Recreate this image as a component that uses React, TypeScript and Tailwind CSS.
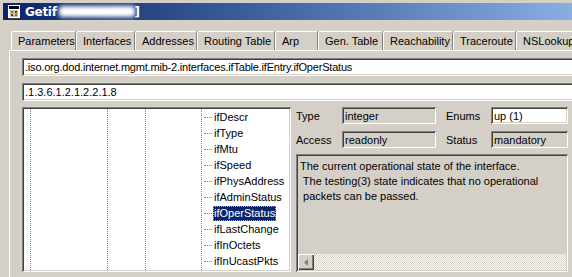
import React from 'react'

const tabs = [
  { label: 'Parameters', w: 'w-[65px]' },
  { label: 'Interfaces', w: 'w-[59px]' },
  { label: 'Addresses', w: 'w-[62px]' },
  { label: 'Routing Table', w: 'w-[78px]' },
  { label: 'Arp', w: 'w-[43px]' },
  { label: 'Gen. Table', w: 'w-[65px]' },
  { label: 'Reachability', w: 'w-[70px]' },
  { label: 'Traceroute', w: 'w-[63px]' },
  { label: 'NSLookup', w: 'w-[70px]' },
]

const items = [
  'ifDescr',
  'ifType',
  'ifMtu',
  'ifSpeed',
  'ifPhysAddress',
  'ifAdminStatus',
  'ifOperStatus',
  'ifLastChange',
  'ifInOctets',
  'ifInUcastPkts',
]

const sunken =
  'shadow-[inset_1px_1px_0_#808080,inset_-1px_-1px_0_#ffffff,inset_2px_2px_0_#404040,inset_-2px_-2px_0_#d4d0c8]'

function AppIcon() {
  return (
    <svg width="14" height="14" viewBox="0 0 14 14" className="shrink-0">
      <rect x="1" y="0" width="12" height="14" fill="#ffffff" />
      <rect x="2" y="1" width="10" height="3" fill="#000000" />
      <rect x="3" y="5" width="8" height="7" fill="#c0c0c0" />
      <rect x="4" y="6" width="2" height="2" fill="#00c000" />
      <rect x="8" y="6" width="2" height="2" fill="#e00000" />
      <rect x="4" y="9" width="2" height="2" fill="#e00000" />
      <rect x="8" y="9" width="2" height="2" fill="#00c000" />
      <rect x="1" y="13" width="12" height="1" fill="#404040" />
    </svg>
  )
}

function Field({ value, white, className }: { value: string; white?: boolean; className: string }) {
  return (
    <div className={`${sunken} ${white ? 'bg-white' : 'bg-[#d4d0c8]'} ${className} flex items-center pl-[3px] pt-[1px] whitespace-nowrap overflow-hidden`}>
      {value}
    </div>
  )
}

export default function App() {
  return (
    <div className="w-[572px] h-[277px] overflow-hidden bg-[#d4d0c8] text-[11px] text-black font-['Liberation_Sans',Arial,sans-serif] flex flex-col border-l border-t border-l-[#d4d0c8] border-t-[#d4d0c8]">
      <div className="pl-[2px] pt-[2px]">
        <div className="h-[17px] bg-gradient-to-r from-[#0a246a] to-[#8aaee0] flex items-center pl-[4px] gap-[4px]">
          <AppIcon />
          <span className="text-white font-bold text-[12px] font-['DejaVu_Sans',sans-serif] tracking-[-0.3px] flex items-center">
            Getif
            <span className="inline-block w-[76px] h-[11px] ml-[2px] bg-white rounded-[3px] blur-[2px]" />
            <span>]</span>
          </span>
        </div>
      </div>

      <div className="flex pl-[10px] mt-[11px] h-[19px] items-end">
        {tabs.map(t => (
          <div
            key={t.label}
            className={`${t.w} shrink-0 h-[19px] border-t border-l border-white rounded-tl-[2px] rounded-tr-[2px] shadow-[inset_-1px_0_0_#808080,1px_0_0_#404040] pl-[6px] pt-[1px] whitespace-nowrap`}
          >
            {t.label}
          </div>
        ))}
      </div>

      <div className="flex-1 ml-[8px] border-t border-l border-white pl-[12px] pt-[7px] flex flex-col min-h-0">
        <Field white value=".iso.org.dod.internet.mgmt.mib-2.interfaces.ifTable.ifEntry.ifOperStatus" className="h-[18px] w-[560px] tracking-[-0.2px]" />
        <Field white value=".1.3.6.1.2.1.2.2.1.8" className="h-[18px] w-[560px] mt-[7px]" />

        <div className="flex mt-[6px] h-[165px]">
          <div className={`${sunken} bg-white w-[269px] shrink-0 relative overflow-hidden p-[2px]`}>
            {[8, 85, 123, 179].map(x => (
              <div key={x} className="absolute top-[2px] bottom-[2px] border-l border-dotted border-[#808080]" style={{ left: x }} />
            ))}
            <div className="flex flex-col pl-[180px]">
              {items.map(it => (
                <div key={it} className="h-[16px] flex items-center">
                  <div className="w-[8px] border-t border-dotted border-[#808080] shrink-0" />
                  <span
                    className={`ml-[1px] h-[15px] px-[1px] flex items-center leading-none ${
                      it === 'ifOperStatus'
                        ? 'bg-[#0a246a] text-white outline-1 outline-dotted outline-[#c8b040] -outline-offset-1'
                        : ''
                    }`}
                  >
                    {it}
                  </span>
                </div>
              ))}
            </div>
          </div>

          <div className="flex-1 pl-[5px] flex flex-col">
            <div className="flex items-start h-[17px]">
              <span className="w-[46px] pt-[1px]">Type</span>
              <Field value="integer" className="h-[17px] w-[94px]" />
              <span className="w-[55px] pl-[10px] pt-[1px]">Enums</span>
              <Field white value="up (1)" className="h-[17px] w-[77px]" />
            </div>
            <div className="flex items-start h-[17px] mt-[7px]">
              <span className="w-[46px] pt-[1px]">Access</span>
              <Field value="readonly" className="h-[17px] w-[94px]" />
              <span className="w-[55px] pl-[10px] pt-[1px]">Status</span>
              <Field value="mandatory" className="h-[17px] w-[77px]" />
            </div>
            <div className={`${sunken} mt-[6px] flex-1 w-[272px] flex flex-col p-[2px]`}>
              <div className="flex-1 pl-[2px] pt-[3px] leading-[15px] whitespace-pre">
                {'The current operational state of the interface.\n The testing(3) state indicates that no operational\n packets can be passed.'}
              </div>
              <div className="h-[16px] flex bg-[repeating-conic-gradient(#ffffff_0_25%,#d4d0c8_0_50%)] bg-[length:2px_2px]">
                <div className="w-[16px] h-[16px] bg-[#d4d0c8] shadow-[inset_1px_1px_0_#ffffff,inset_-1px_-1px_0_#404040,inset_-2px_-2px_0_#808080] flex items-center justify-center">
                  <svg width="4" height="7" viewBox="0 0 4 7">
                    <path d="M4 0 L0 3.5 L4 7 Z" fill="#808080" />
                  </svg>
                </div>
              </div>
            </div>
          </div>
        </div>
      </div>
    </div>
  )
}
